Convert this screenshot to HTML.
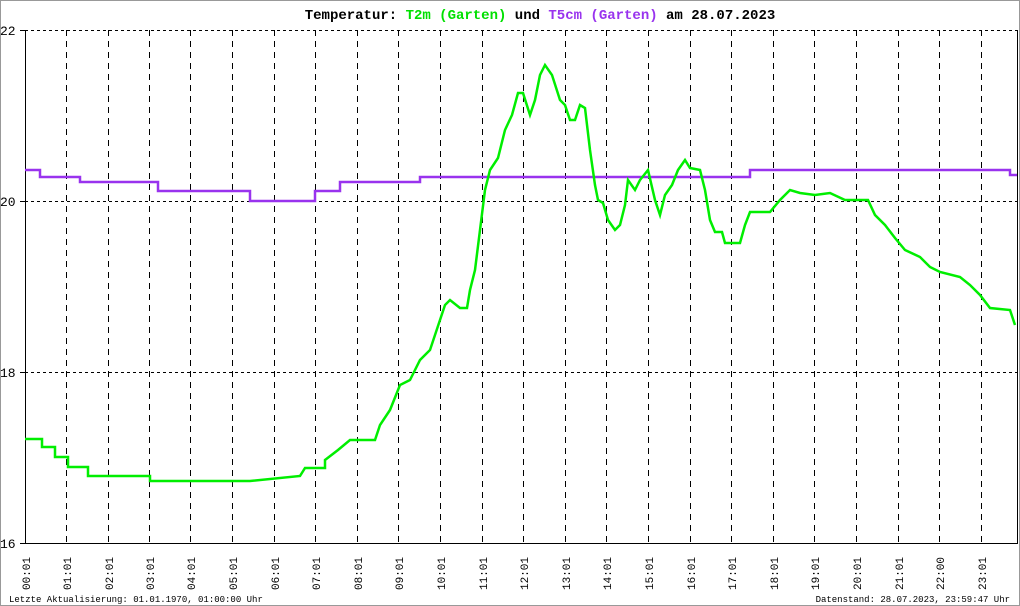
<!DOCTYPE html>
<html><head><meta charset="utf-8"><style>
html,body{margin:0;padding:0;background:#fff}
svg{display:block}
text{font-family:"Liberation Mono","DejaVu Sans Mono",monospace}
</style></head><body>
<svg width="1020" height="606" viewBox="0 0 1020 606" xmlns="http://www.w3.org/2000/svg">
<rect x="0.5" y="0.5" width="1019" height="605" fill="#fff" stroke="#999"/>
<text x="540" y="19" text-anchor="middle" font-size="14" font-weight="bold" fill="#000">Temperatur: <tspan fill="#00e000">T2m (Garten)</tspan> und <tspan fill="#9933ee">T5cm (Garten)</tspan> am 28.07.2023</text>
<g stroke="#000" stroke-width="1" stroke-dasharray="3,3" fill="none">
<line x1="25" y1="30.5" x2="1017" y2="30.5"/>
<line x1="25" y1="201.5" x2="1017" y2="201.5"/>
<line x1="25" y1="372.5" x2="1017" y2="372.5"/>
<g stroke-dasharray="6,5">
<line x1="66.5" y1="30" x2="66.5" y2="543"/><line x1="108.5" y1="30" x2="108.5" y2="543"/>
<line x1="149.5" y1="30" x2="149.5" y2="543"/><line x1="190.5" y1="30" x2="190.5" y2="543"/>
<line x1="232.5" y1="30" x2="232.5" y2="543"/><line x1="274.5" y1="30" x2="274.5" y2="543"/>
<line x1="315.5" y1="30" x2="315.5" y2="543"/><line x1="357.5" y1="30" x2="357.5" y2="543"/>
<line x1="398.5" y1="30" x2="398.5" y2="543"/><line x1="440.5" y1="30" x2="440.5" y2="543"/>
<line x1="482.5" y1="30" x2="482.5" y2="543"/><line x1="523.5" y1="30" x2="523.5" y2="543"/>
<line x1="565.5" y1="30" x2="565.5" y2="543"/><line x1="606.5" y1="30" x2="606.5" y2="543"/>
<line x1="648.5" y1="30" x2="648.5" y2="543"/><line x1="690.5" y1="30" x2="690.5" y2="543"/>
<line x1="731.5" y1="30" x2="731.5" y2="543"/><line x1="773.5" y1="30" x2="773.5" y2="543"/>
<line x1="814.5" y1="30" x2="814.5" y2="543"/><line x1="856.5" y1="30" x2="856.5" y2="543"/>
<line x1="898.5" y1="30" x2="898.5" y2="543"/><line x1="939.5" y1="30" x2="939.5" y2="543"/>
<line x1="981.5" y1="30" x2="981.5" y2="543"/>
</g></g>
<g stroke="#000" stroke-width="1">
<line x1="25.5" y1="30" x2="25.5" y2="544"/>
<line x1="1017.5" y1="30" x2="1017.5" y2="544"/>
<line x1="20" y1="543.5" x2="1018" y2="543.5"/>
<line x1="20" y1="30.5" x2="25" y2="30.5"/><line x1="20" y1="201.5" x2="25" y2="201.5"/><line x1="20" y1="372.5" x2="25" y2="372.5"/>
</g>
<g font-size="13" fill="#000" style="font-family:'Liberation Sans',sans-serif">
<text x="0" y="35">22</text><text x="0" y="206">20</text><text x="0" y="377">18</text><text x="0" y="548">16</text>
</g>
<polyline fill="none" stroke="#9933ee" stroke-width="2.5" points="25,170 40,170 40,177 80,177 80,182 158,182 158,191 250,191 250,201 315,201 315,191 340,191 340,182 420,182 420,177 750,177 750,170 1010,170 1010,175 1017,175"/>
<polyline fill="none" stroke="#00ee00" stroke-width="2.5" points="25,439 42,439 42,447 55,447 55,457 68,457 68,467 88,467 88,476 150,476 150,481 250,481 300,476 305,468 325,468 325,460 338,450 350,440 375,440 380,425 390,410 400,385 410,380 420,360 430,350 440,320 445,305 450,300 460,308 467,308 470,290 475,270 480,230 485,190 490,170 498,158 505,130 512,115 518,93 523,93 530,115 535,100 540,75 545,65 552,75 560,100 565,105 570,120 575,120 580,105 585,108 590,150 595,185 598,200 603,203 608,220 615,230 620,225 625,205 628,180 635,190 640,180 648,170 655,200 660,215 665,195 672,185 678,170 685,160 690,168 700,170 705,190 710,220 715,232 722,232 725,243 740,243 745,225 750,212 770,212 780,200 790,190 800,193 815,195 830,193 845,200 868,200 875,215 885,225 895,238 905,250 920,257 930,267 940,272 960,277 970,285 980,295 990,308 1010,310 1015,325"/>
<g font-size="11" fill="#000">
<text transform="translate(30,590) rotate(-90)">00:01</text>
<text transform="translate(71,590) rotate(-90)">01:01</text>
<text transform="translate(113,590) rotate(-90)">02:01</text>
<text transform="translate(154,590) rotate(-90)">03:01</text>
<text transform="translate(195,590) rotate(-90)">04:01</text>
<text transform="translate(237,590) rotate(-90)">05:01</text>
<text transform="translate(279,590) rotate(-90)">06:01</text>
<text transform="translate(320,590) rotate(-90)">07:01</text>
<text transform="translate(362,590) rotate(-90)">08:01</text>
<text transform="translate(403,590) rotate(-90)">09:01</text>
<text transform="translate(445,590) rotate(-90)">10:01</text>
<text transform="translate(487,590) rotate(-90)">11:01</text>
<text transform="translate(528,590) rotate(-90)">12:01</text>
<text transform="translate(570,590) rotate(-90)">13:01</text>
<text transform="translate(611,590) rotate(-90)">14:01</text>
<text transform="translate(653,590) rotate(-90)">15:01</text>
<text transform="translate(695,590) rotate(-90)">16:01</text>
<text transform="translate(736,590) rotate(-90)">17:01</text>
<text transform="translate(778,590) rotate(-90)">18:01</text>
<text transform="translate(819,590) rotate(-90)">19:01</text>
<text transform="translate(861,590) rotate(-90)">20:01</text>
<text transform="translate(903,590) rotate(-90)">21:01</text>
<text transform="translate(944,590) rotate(-90)">22:00</text>
<text transform="translate(986,590) rotate(-90)">23:01</text>
</g>
<text x="9" y="602" font-size="9" fill="#000">Letzte Aktualisierung: 01.01.1970, 01:00:00 Uhr</text>
<text x="1010" y="602" font-size="9" fill="#000" text-anchor="end">Datenstand: 28.07.2023, 23:59:47 Uhr</text>
</svg>
</body></html>
